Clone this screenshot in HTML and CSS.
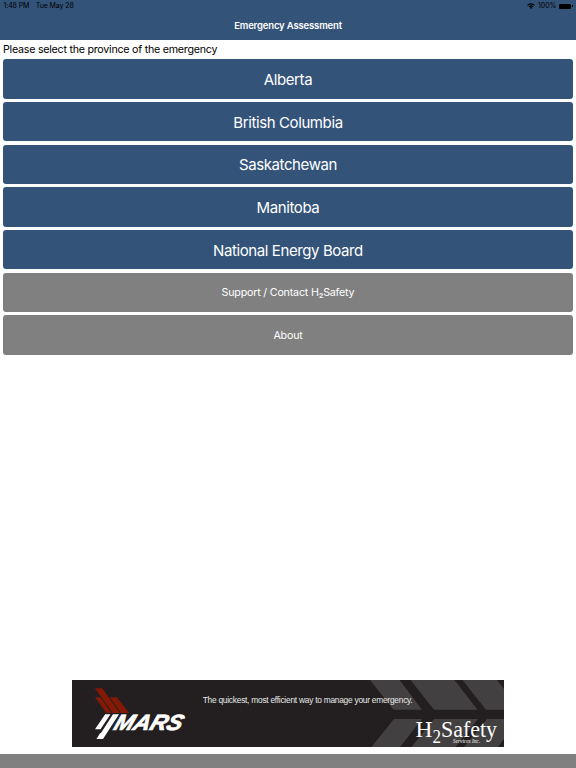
FILE: index.html
```html
<!DOCTYPE html>
<html lang="en">
<head>
    <meta charset="UTF-8">
    <title>Emergency Assessment</title>
    <link rel="stylesheet" href="styles.css">
</head>
<body>
    <div class="status-bar">
        <div class="status-left">
            <span>1:48 PM</span>
            <span>Tue May 28</span>
        </div>
        <div class="status-right">
            <svg class="wifi" viewBox="0 0 16 12">
                <path d="M8 12 L5.4 9.2 A3.8 3.8 0 0 1 10.6 9.2 Z"/>
                <path d="M3.9 7.7 A6 6 0 0 1 12.1 7.7" fill="none" stroke="#000" stroke-width="2.2"/>
                <path d="M1 4.6 A10 10 0 0 1 15 4.6" fill="none" stroke="#000" stroke-width="2.2"/>
            </svg>
            <span>100%</span>
            <span class="battery"></span>
        </div>
    </div>

    <header class="nav-bar">
        <h1>Emergency Assessment</h1>
    </header>

    <main class="content">
        <p class="prompt">Please select the province of the emergency</p>
        <div class="button-list">
            <button class="btn">Alberta</button>
            <button class="btn">British Columbia</button>
            <button class="btn">Saskatchewan</button>
            <button class="btn">Manitoba</button>
            <button class="btn">National Energy Board</button>
            <button class="btn btn-gray">Support / Contact H₂Safety</button>
            <button class="btn btn-gray">About</button>
        </div>
    </main>

    <!-- Banner -->
    <svg class="banner" viewBox="72 680 432 67">
        <rect x="72" y="680" width="432" height="67" fill="#231f20"/>
        <g fill="#434041">
            <path d="M370 680 H399.5 L422 709.7 H393.5 Z"/>
            <path d="M410.5 680 H454.5 L477.5 709.7 H434 Z"/>
            <path d="M462.5 680 H497 L504 689 V709.7 H486 Z"/>
            <path d="M394 719 H422 L400 747 H371.5 Z"/>
            <path d="M434 719 H478 L455.5 747 H411.5 Z"/>
            <path d="M487 719 H504 V739 L498 747 H464 Z"/>
        </g>
        <g fill="#841a05">
            <path d="M95 688.3 H102.3 L119.8 713 H112.5 Z"/>
            <path d="M95 697.3 H100.3 L111.4 713 H106.3 Z"/>
            <path d="M109.7 697.3 H117 L129 713 H120.9 Z"/>
        </g>
        <g fill="#fff">
            <path d="M105.2 714.3 H110.5 L100.5 729.3 H95 Z"/>
            <path d="M113 714.3 H119 L103 739 H96.5 L100.2 733 H101 Z"/>
        </g>
        <text class="mars" transform="translate(112.5 730.3) skewX(-20)" textLength="68" lengthAdjust="spacingAndGlyphs">MARS</text>
        <text class="slogan" x="202.7" y="703.3" textLength="210">The quickest, most efficient way to manage your emergency.</text>
        <text class="company" x="415.5" y="737" textLength="17" lengthAdjust="spacingAndGlyphs">H</text>
        <text class="company company-sub" x="432.5" y="743" textLength="8.5" lengthAdjust="spacingAndGlyphs">2</text>
        <text class="company" x="441" y="737" textLength="56" lengthAdjust="spacingAndGlyphs">Safety</text>
        <text class="services" x="453" y="743" textLength="27">Services Inc.</text>
    </svg>

    <footer class="bottom-bar"></footer>
</body>
</html>
```
FILE: styles.css
```css
* {
    box-sizing: border-box;
}

body {
    display: flex;
    flex-direction: column;
    height: 768px;
    margin: 0;
    background-color: #fff;
    font-family: Inter, "Liberation Sans", sans-serif;
    overflow: hidden;
}

.status-bar {
    display: flex;
    justify-content: space-between;
    height: 12px;
    padding: 0 3px;
    background-color: #335379;
    color: #000;
    font-size: 7px;
    line-height: 12px;
}

.status-left,
.status-right {
    display: flex;
    align-items: center;
}

.status-left {
    gap: 6.5px;
    padding-left: 0.5px;
    letter-spacing: -0.1px;
}

.status-right {
    gap: 2.5px;
}

.wifi {
    width: 8px;
    height: 6px;
}

.battery {
    position: relative;
    width: 12px;
    height: 5px;
    margin-right: 2px;
    background-color: #000;
    border-radius: 1.3px;
}

.battery::after {
    content: "";
    position: absolute;
    top: 1.5px;
    right: -1.5px;
    width: 1px;
    height: 2px;
    background-color: #000;
}

.nav-bar {
    height: 28px;
    background-color: #335379;
    color: #fff;
    text-align: center;
}

.nav-bar h1 {
    margin: 0;
    font-size: 9.5px;
    font-weight: 600;
    letter-spacing: -0.16px;
    line-height: 28px;
}

.content {
    flex: 1;
    padding: 0 3px;
}

.prompt {
    height: 19.3px;
    margin: 0;
    font-size: 10.7px;
    letter-spacing: -0.25px;
    line-height: 19px;
}

.button-list {
    display: flex;
    flex-direction: column;
    gap: 3.3px;
}

.btn {
    height: 39.4px;
    padding: 1px 0 0;
    border: none;
    border-radius: 3px;
    background-color: #335379;
    color: #fff;
    font-family: inherit;
    font-size: 15px;
    letter-spacing: -0.4px;
}

.btn-gray {
    padding: 0;
    background-color: #808080;
    font-size: 10.7px;
    letter-spacing: -0.2px;
}

.banner {
    width: 432px;
    height: 67px;
    margin: 0 auto 7px;
}

.mars {
    fill: #fff;
    font-family: "Liberation Sans", sans-serif;
    font-size: 22px;
    font-style: italic;
    font-weight: bold;
    stroke: #fff;
    stroke-width: 0.7px;
}

.slogan {
    fill: #e8e8e8;
    font-family: "Liberation Sans", sans-serif;
    font-size: 8.4px;
}

.company {
    fill: #fff;
    font-family: "Liberation Serif", serif;
    font-size: 23px;
}

.company-sub {
    font-size: 18.5px;
}

.services {
    fill: #fff;
    font-family: "Liberation Serif", serif;
    font-size: 5.2px;
    font-style: italic;
}

.bottom-bar {
    height: 14px;
    background-color: #808080;
}
```
